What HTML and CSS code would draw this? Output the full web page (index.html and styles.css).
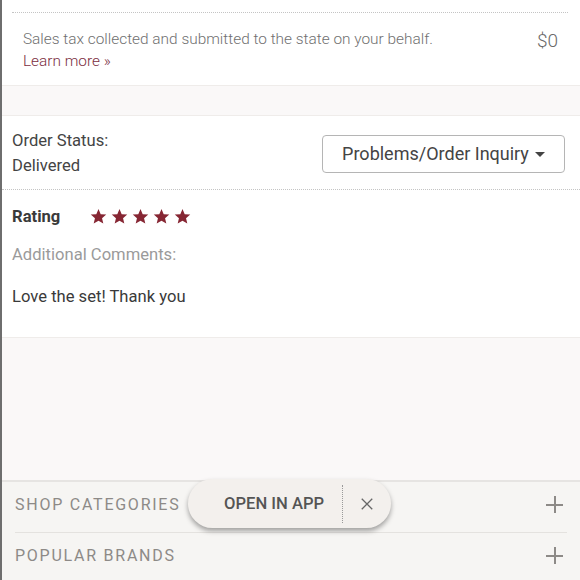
FILE: index.html
```html
<!DOCTYPE html>
<html>
<head>
<meta charset="utf-8">
<link rel="stylesheet" href="styles.css">
</head>
<body>
<div class="page">
  <section class="tax">
    <div class="tax-inner">
      <div class="tax-text">
        <div class="tax-desc">Sales tax collected and submitted to the state on your behalf.</div>
        <a class="learn" href="#">Learn more »</a>
      </div>
      <div class="tax-amount">$0</div>
    </div>
  </section>
  <div class="band"></div>
  <section class="order">
    <div class="status">
      <div>Order Status:</div>
      <div class="status-val">Delivered</div>
    </div>
    <button class="inquiry">Problems/Order Inquiry <span class="caret"></span></button>
  </section>
  <section class="review">
    <div class="rating">
      <span class="rating-label">Rating</span>
      <span class="stars">
        <svg viewBox="0 0 24 24"><path d="M12 1.5l3.1 7.2 7.8.6-5.9 5.1 1.8 7.6L12 18l-6.8 4 1.8-7.6-5.9-5.1 7.8-.6z"/></svg>
        <svg viewBox="0 0 24 24"><path d="M12 1.5l3.1 7.2 7.8.6-5.9 5.1 1.8 7.6L12 18l-6.8 4 1.8-7.6-5.9-5.1 7.8-.6z"/></svg>
        <svg viewBox="0 0 24 24"><path d="M12 1.5l3.1 7.2 7.8.6-5.9 5.1 1.8 7.6L12 18l-6.8 4 1.8-7.6-5.9-5.1 7.8-.6z"/></svg>
        <svg viewBox="0 0 24 24"><path d="M12 1.5l3.1 7.2 7.8.6-5.9 5.1 1.8 7.6L12 18l-6.8 4 1.8-7.6-5.9-5.1 7.8-.6z"/></svg>
        <svg viewBox="0 0 24 24"><path d="M12 1.5l3.1 7.2 7.8.6-5.9 5.1 1.8 7.6L12 18l-6.8 4 1.8-7.6-5.9-5.1 7.8-.6z"/></svg>
      </span>
    </div>
    <div class="comments-label">Additional Comments:</div>
    <div class="comment">Love the set! Thank you</div>
  </section>
  <div class="spacer"></div>
  <footer class="footer">
    <div class="acc-row"><span>SHOP CATEGORIES</span><span class="plus"></span></div>
    <div class="acc-row"><span>POPULAR BRANDS</span><span class="plus"></span></div>
    <div class="app-pill">
      <span class="app-open">OPEN IN APP</span>
      <span class="app-sep"></span>
      <span class="app-close"><svg viewBox="0 0 16 16"><path d="M2 2L14 14M14 2L2 14"/></svg></span>
    </div>
  </footer>
</div>
</body>
</html>
```

FILE: styles.css
```css
* { box-sizing: border-box; }
html, body { margin: 0; padding: 0; }
body {
  font-family: Roboto, "Liberation Sans", sans-serif;
  background: #fff;
  width: 580px;
  height: 580px;
  overflow: hidden;
}
.page {
  border-left: 2px solid #6e6e6e;
  height: 580px;
  display: flex;
  flex-direction: column;
  position: relative;
}
.tax {
  background: #fff;
  padding: 0 12px 0 10px;
  height: 86px;
  border-bottom: 1px solid #efecea;
}
.tax-inner {
  border-top: 1px dotted #c4c4c4;
  margin-top: 12px;
  display: flex;
  justify-content: space-between;
  padding: 15px 10px 0 11px;
}
.tax-desc {
  font-size: 15.4px;
  font-weight: 300;
  color: #707070;
  line-height: 22px;
}
.learn {
  display: inline-block;
  font-size: 15.4px;
  font-weight: 300;
  color: #7b2e41;
  text-decoration: none;
  line-height: 22px;
}
.tax-amount {
  font-size: 19px;
  font-weight: 300;
  color: #6a6a6a;
  line-height: 24px;
  padding-top: 1px;
}
.band {
  height: 30px;
  background: #faf8f8;
  border-bottom: 1px solid #efecea;
}
.order {
  display: flex;
  justify-content: space-between;
  align-items: center;
  padding: 0 14px 0 10px;
  height: 74px;
  border-bottom: 1px dotted #c4c4c4;
}
.status {
  font-size: 16.6px;
  color: #444;
  line-height: 25px;
  padding-top: 1px;
}
.inquiry {
  font-family: Roboto, "Liberation Sans", sans-serif;
  font-size: 18px;
  color: #444;
  background: #fff;
  border: 1px solid #b5b5b5;
  border-radius: 4px;
  height: 38px;
  width: 243px;
  padding: 0;
  display: flex;
  align-items: center;
  justify-content: center;
  gap: 6px;
  margin-top: 2px;
  margin-right: 1px;
}
.caret {
  width: 0;
  height: 0;
  border-left: 5px solid transparent;
  border-right: 5px solid transparent;
  border-top: 5px solid #444;
  margin-top: 2px;
}
.review {
  padding: 14px 10px 0 10px;
  height: 148px;
  border-bottom: 1px solid #efecea;
}
.rating {
  display: flex;
  align-items: center;
  height: 24px;
}
.rating-label {
  font-size: 16.6px;
  font-weight: 700;
  color: #3a3a3a;
  width: 78px;
}
.stars { display: flex; gap: 4px; margin-top: 1px; }
.stars svg { width: 17px; height: 17px; fill: #862633; }
.comments-label {
  font-size: 16.6px;
  color: #9a9a9a;
  margin-top: 17px;
  line-height: 20px;
}
.comment {
  font-size: 16.6px;
  color: #3a3a3a;
  margin-top: 22px;
  line-height: 20px;
}
.spacer {
  flex: 1;
  background: #faf8f8;
}
.footer {
  background: #f6f5f3;
  border-top: 2px solid #e6e4e2;
  padding: 0 13px;
  height: 100px;
  flex: none;
  position: relative;
}
.acc-row {
  display: flex;
  justify-content: space-between;
  align-items: center;
  height: 51px;
  padding-bottom: 5px;
  font-size: 16px;
  letter-spacing: 1.75px;
  color: #8d8a87;
  border-bottom: 1px solid #e4e2df;
  padding-right: 4px;
}
.acc-row:last-child { border-bottom: none; }
.plus {
  width: 17px;
  height: 17px;
  position: relative;
}
.plus::before, .plus::after {
  content: "";
  position: absolute;
  background: #8d8a87;
}
.plus::before { left: 0; right: 0; top: 8px; height: 1.5px; }
.plus::after { top: 0; bottom: 0; left: 8px; width: 1.5px; }
.app-pill {
  position: absolute;
  left: 186px;
  top: -3px;
  width: 203px;
  height: 49px;
  border-radius: 25px;
  background: #f3f0ed;
  box-shadow: 0 3px 5px rgba(0,0,0,0.35);
  display: flex;
  align-items: center;
}
.app-open {
  font-size: 16.6px;
  font-weight: 500;
  color: #555;
  margin-left: 36px;
  width: 118px;
}
.app-sep {
  width: 0;
  height: 38px;
  border-left: 1.5px dotted #999;
}
.app-close {
  margin-left: 17px;
  width: 14px;
  height: 14px;
  display: flex;
}
.app-close svg { width: 14px; height: 14px; stroke: #666; stroke-width: 1.5; fill: none; }
```
